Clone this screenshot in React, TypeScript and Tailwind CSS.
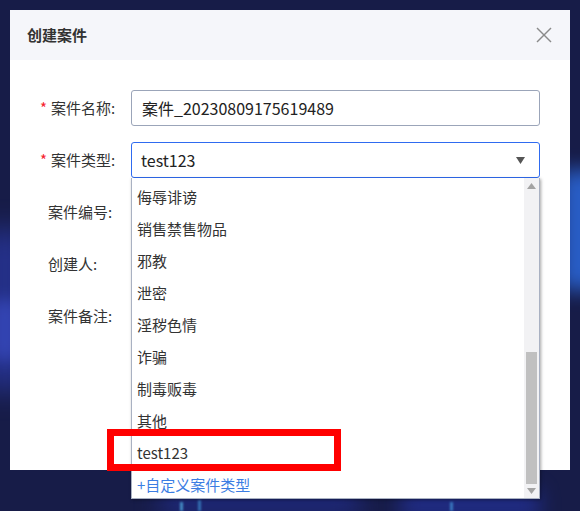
import React from 'react';

const FONT = { fontFamily: '"Microsoft YaHei", "Noto Sans CJK SC", "Noto Sans", sans-serif' };

const OPTIONS = ['侮辱诽谤', '销售禁售物品', '邪教', '泄密', '淫秽色情', '诈骗', '制毒贩毒', '其他', 'test123'];

function Label({ text, required }: { text: string; required?: boolean }) {
  return (
    <div className={`w-[121px] shrink-0 text-[15px] text-[#333] ${required ? 'pl-[30px]' : 'pl-[38px]'}`}>
      {required && <span className="text-[#f5222d] mr-[4px]">*</span>}
      {text}
    </div>
  );
}

export default function App() {
  return (
    <div className="relative w-[580px] h-[511px] overflow-hidden bg-[#171c48] pt-[10px] pl-[10px]" style={FONT}>
      {/* background glows */}
      <div className="absolute left-[-20px] top-[230px] w-[50px] h-[160px] bg-[#2b3aa8] blur-[14px] opacity-70" />
      <div className="absolute left-[-10px] top-[300px] w-[30px] h-[60px] bg-[#3e52d0] blur-[8px] opacity-60" />
      <div className="absolute right-[-20px] top-[170px] w-[40px] h-[120px] bg-[#2d6fe8] blur-[10px] opacity-80" />
      <div className="absolute left-[160px] top-[480px] w-[200px] h-[40px] bg-[#1f2a80] blur-[12px] opacity-80" />
      <div className="absolute left-[400px] top-[490px] w-[140px] h-[30px] bg-[#2433a0] blur-[10px] opacity-70" />
      <div className="absolute left-[180px] top-[502px] w-[3px] h-[9px] bg-[#5fd2ff] blur-[1px] opacity-60" />
      <div className="absolute left-[198px] top-[500px] w-[3px] h-[11px] bg-[#4ab8f5] blur-[1px] opacity-50" />
      <div className="absolute left-[450px] top-[502px] w-[3px] h-[9px] bg-[#52c4ff] blur-[1px] opacity-50" />

      {/* dialog */}
      <div className="relative w-[560px] h-[460px] bg-white">
        <div className="h-[50px] bg-[#f5f6fa] flex items-center justify-between pl-[17px] pr-[18px]">
          <span className="text-[15px] font-bold text-[#333]">创建案件</span>
          <svg width="16" height="16" viewBox="0 0 16 16" fill="none" stroke="#8a8a8a" strokeWidth="1.4">
            <line x1="1" y1="1" x2="15" y2="15" />
            <line x1="15" y1="1" x2="1" y2="15" />
          </svg>
        </div>

        <div className="flex flex-col gap-[16px] pt-[30px]">
          <div className="flex items-center h-[36px]">
            <Label text="案件名称:" required />
            <div className="w-[409px] h-[36px] border border-[#9ba5b9] rounded-[3px] flex items-center pl-[10px] text-[16px] text-[#222]">
              案件_20230809175619489
            </div>
          </div>

          <div className="flex items-center h-[36px]">
            <Label text="案件类型:" required />
            <div className="relative w-[409px]">
              <div className="h-[36px] border border-[#2f6bf0] rounded-[3px] flex items-center justify-between pl-[9px] pr-[14px] text-[16px] text-[#222]">
                <span>test123</span>
                <svg width="9" height="7" viewBox="0 0 9 7">
                  <path d="M0 0 H9 L4.5 7 Z" fill="#555" />
                </svg>
              </div>
              {/* dropdown */}
              <div className="absolute z-10 left-0 top-full w-[409px] h-[321px] bg-white border border-[#a9b1c2] border-t-0 shadow-[1px_1px_3px_rgba(0,0,0,0.35)] flex overflow-hidden">
                <div className="flex-1 pt-[3px]">
                  {OPTIONS.map((o) => (
                    <div key={o} className="h-[32px] flex items-center pl-[5px] text-[15px] text-[#333]">
                      {o}
                    </div>
                  ))}
                  <div className="h-[32px] flex items-center pl-[5px] text-[15px] text-[#3b7de3]">+自定义案件类型</div>
                </div>
                <div className="w-[15px] bg-[#f2f2f4] flex flex-col items-center">
                  <svg width="9" height="6" viewBox="0 0 9 6" className="mt-[5px]">
                    <path d="M0 6 H9 L4.5 0 Z" fill="#a3a3a3" />
                  </svg>
                  <div className="flex-1" />
                  <div className="w-[11px] h-[132px] bg-[#c0c0c0]" />
                  <svg width="9" height="6" viewBox="0 0 9 6" className="mt-[4px] mb-[4px]">
                    <path d="M0 0 H9 L4.5 6 Z" fill="#a3a3a3" />
                  </svg>
                </div>
              </div>
            </div>
          </div>

          <div className="flex items-center h-[36px]">
            <Label text="案件编号:" />
          </div>
          <div className="flex items-center h-[36px]">
            <Label text="创建人:" />
          </div>
          <div className="flex items-center h-[36px]">
            <Label text="案件备注:" />
          </div>
        </div>
      </div>

      {/* annotation */}
      <div className="absolute z-20 left-[107px] top-[429px] w-[234px] h-[42px] border-[7px] border-[#ff0000]" />
    </div>
  );
}
